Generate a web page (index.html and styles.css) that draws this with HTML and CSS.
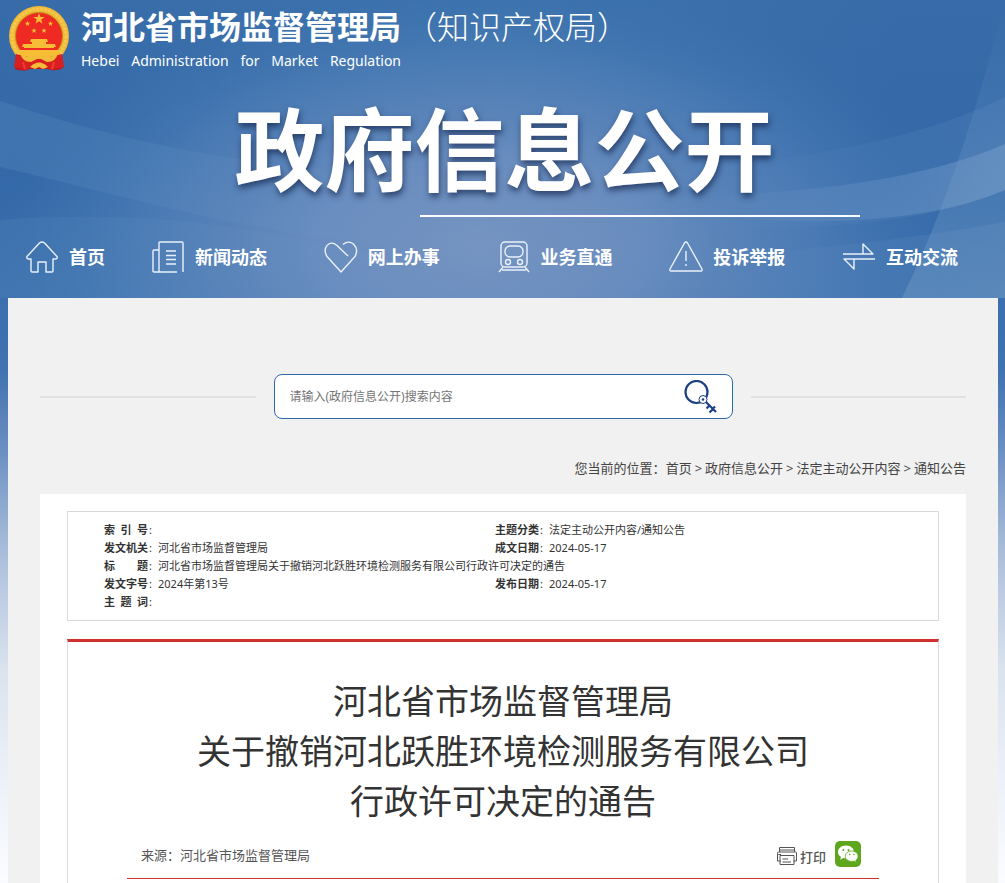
FILE: index.html
```html
<!DOCTYPE html>
<html lang="zh-CN">
<head>
<meta charset="utf-8">
<title>河北省市场监督管理局 - 政府信息公开</title>
<link rel="stylesheet" href="styles.css">
</head>
<body>
<svg class="backdrop" viewBox="0 0 1005 883" preserveAspectRatio="none" aria-hidden="true">
  <defs>
    <linearGradient id="sky" x1="0" y1="0" x2="0" y2="1">
      <stop offset="0" stop-color="#376ba9"/>
      <stop offset="0.2" stop-color="#3469a9"/>
      <stop offset="0.42" stop-color="#4073b0"/>
      <stop offset="0.51" stop-color="#6b8fc2"/>
      <stop offset="0.6" stop-color="#9db5d5"/>
      <stop offset="0.67" stop-color="#bccbe3"/>
      <stop offset="0.76" stop-color="#dae3ee"/>
      <stop offset="0.86" stop-color="#e9eef7"/>
      <stop offset="1" stop-color="#fbfcff"/>
    </linearGradient>
    <radialGradient id="glow" gradientUnits="userSpaceOnUse" cx="0" cy="0" r="1" gradientTransform="translate(480 245) scale(480 260)">
      <stop offset="0" stop-color="#7594c1"/>
      <stop offset="0.35" stop-color="#6d8fc0" stop-opacity="0.9"/>
      <stop offset="0.7" stop-color="#5f88bd" stop-opacity="0.45"/>
      <stop offset="1" stop-color="#4178b2" stop-opacity="0"/>
    </radialGradient>
    <linearGradient id="top" x1="0" y1="0" x2="1" y2="0">
      <stop offset="0" stop-color="#3f78b0" stop-opacity="0"/>
      <stop offset="0.5" stop-color="#3f78b0" stop-opacity="0.6"/>
      <stop offset="0.9" stop-color="#3f78b0" stop-opacity="0"/>
    </linearGradient>
    <linearGradient id="beam" x1="0" y1="0" x2="0" y2="1">
      <stop offset="0" stop-color="#7ea6cb" stop-opacity="0"/>
      <stop offset="0.5" stop-color="#7ea6cb" stop-opacity="0.2"/>
      <stop offset="1" stop-color="#7ea6cb" stop-opacity="0.35"/>
    </linearGradient>
    <linearGradient id="wave" x1="0" y1="0" x2="1" y2="0">
      <stop offset="0" stop-color="#8fb0d8" stop-opacity="0"/>
      <stop offset="1" stop-color="#8fb0d8" stop-opacity="0.35"/>
    </linearGradient>
    <linearGradient id="waveLeft" x1="0" y1="0" x2="1" y2="0">
      <stop offset="0" stop-color="#5f93c0" stop-opacity="0.25"/>
      <stop offset="1" stop-color="#7fa0d0" stop-opacity="0"/>
    </linearGradient>
  </defs>
  <rect width="1005" height="883" fill="url(#sky)"/>
  <rect width="1005" height="300" fill="url(#top)"/>
  <rect width="1005" height="500" fill="url(#glow)"/>
  <path d="M0 101Q130 145 260 162T500 180V250Q330 248 160 206T0 167Z" fill="url(#waveLeft)"/>
  <path d="M0 220Q160 208 300 240T600 262V298H0Z" fill="url(#waveLeft)" opacity="0.7"/>
  <path d="M1005 97Q900 150 700 168V226Q900 235 1005 190Z" fill="url(#wave)" opacity="0.35"/>
  <path d="M1005 144Q900 190 700 196V215Q900 235 1005 190Z" fill="url(#wave)"/>
  <path d="M1005 222Q850 250 700 255V298H1005Z" fill="url(#wave)" opacity="0.4"/>
  <path d="M1005 0Q960 180 902 298H1005Z" fill="url(#beam)"/>
</svg>

<header class="site-header">
  <div class="brand">
    <svg class="emblem" viewBox="0 0 62 66" role="img" aria-label="国徽">
      <path d="M8 48 L7 64 Q15 67 22 64 H40 Q48 67 55 63 L54 48 Z" fill="#c4161d"/>
      <circle cx="31" cy="31" r="30" fill="#efb935"/>
      <circle cx="31" cy="31" r="27" fill="none" stroke="#f5c84e" stroke-width="3" stroke-dasharray="3 1"/>
      <circle cx="31" cy="31" r="23.500" fill="#ee2a23" stroke="#c9871c" stroke-width="1"/>
      <g fill="#f6bd35">
        <path d="M31 8l1.400 4h4.300l-3.500 2.600 1.300 4.200-3.500-2.600-3.500 2.600 1.300-4.200L25.300 12h4.300z"/>
        <path id="star" d="M19.500 16l.7 1.800h2l-1.600 1.200.6 2-1.700-1.200-1.700 1.200.6-2-1.600-1.200h2z"/>
        <use href="#star" x="23"/>
        <use href="#star" x="6.500" y="7"/>
        <use href="#star" x="16.500" y="7"/>
        <path d="M23 34h16l1 3h-2v2h9l1 3h-2v1H16v-1h-2l1-3h9v-2h-2z"/>
        <path d="M9 45h44q-2 6-8 9H17q-6-3-8-9z"/>
      </g>
      <path d="M8 49l12 3 11 2 11-2 12-3 2 13-13 3-5-5-7-2-7 2-5 5-13-3z" fill="#d91f20"/>
      <path d="M12 48q8 6 14 3 5-4 10 0 6 3 14-3-2 9-11 9l-8-4-8 4q-9 0-11-9zM22 62q9-9 18 0l-5 2-4-2-4 2z" fill="#f3bb3a"/>
      <path d="M15 57l2 7M46 57l-2 7" stroke="#ef3c2e" stroke-width="2"/>
    </svg>
    <div class="brand-names">
      <div class="brand-cn">河北省市场监督管理局</div>
      <div class="brand-en">Hebei Administration for Market Regulation</div>
    </div>
    <div class="brand-sub">（知识产权局）</div>
  </div>
  <h1 class="banner-title">政府信息公开</h1>
  <hr class="banner-rule">
  <nav class="main-nav" aria-label="主导航">
    <a href="#home"><svg class="nav-icon" viewBox="0 0 34 34"><path d="M6 19H4Q1 19 2 16.500L14.500 3Q17 1 19.500 3L32 16.500Q33 19 30 19H28V31Q28 32 27 32H21V22H13V32H7Q6 32 6 31Z"/></svg>首页</a>
    <a href="#news"><svg class="nav-icon" viewBox="0 0 34 34"><path d="M26 32H3Q2 32 2 31V11Q2 10 3 10H8M8 32V3Q8 2 9 2H31Q32 2 32 3V32M15 11H25M15 15.500H25M15 19.500H25M15 24H25"/></svg>新闻动态</a>
    <a href="#service"><svg class="nav-icon" viewBox="0 0 34 34"><path d="M24 16L13 5.500C5-1 -2 8 3 16.500L17 32L31 16.500C36 7 27-2 19 4.500"/></svg>网上办事</a>
    <a href="#direct"><svg class="nav-icon" viewBox="0 0 34 34"><rect x="4" y="2" width="26" height="25" rx="4"/><rect x="8" y="6" width="18" height="11" rx="5"/><circle cx="11" cy="22" r="2.500"/><circle cx="23" cy="22" r="2.500"/><path d="M6 27L2 32M28 27L32 32M5 30H29"/></svg>业务直通</a>
    <a href="#report"><svg class="nav-icon" viewBox="0 0 34 34"><path d="M15.500 3Q17 1 18.500 3L33 29Q33.500 31 32 31H2Q.5 31 1 29ZM17 11V21M17 24V26"/></svg>投诉举报</a>
    <a href="#interact"><svg class="nav-icon" viewBox="0 0 34 34"><path d="M1 14H31L21 4V14M33 19H2L12 29V19"/></svg>互动交流</a>
  </nav>
</header>

<main class="page">
  <form class="search-row" role="search">
    <div class="search-box">
      <input type="text" aria-label="搜索政府信息公开内容" placeholder="请输入(政府信息公开)搜索内容">
      <button type="submit" aria-label="搜索">
        <svg viewBox="0 0 34 34" fill="none" stroke="#1c3f86">
          <circle cx="13.500" cy="12" r="11" stroke-width="2.200"/>
          <circle cx="20" cy="19.500" r="4" fill="#fff" stroke-width="1"/>
          <circle cx="20" cy="19.500" r="1.300" fill="#1c3f86" stroke="none"/>
          <path d="M23 22L33 32M26.500 25.500l-3 3M30 29l-3.500 3.500M30 28.500l2-2" stroke-width="2.200"/>
        </svg>
      </button>
    </div>
  </form>

  <nav class="crumbs" aria-label="当前位置">
    <span>您当前的位置：</span><a href="#home">首页</a><span class="sep">&gt;</span><a href="#open">政府信息公开</a><span class="sep">&gt;</span><a href="#content">法定主动公开内容</a><span class="sep">&gt;</span><a href="#notice">通知公告</a>
  </nav>

  <section class="panel">
    <div class="meta-box">
      <table class="meta">
        <colgroup><col class="col-label"><col><col class="col-label"><col class="col-right"></colgroup>
        <tr><th scope="row"><b>索 引 号</b>:</th><td></td><th scope="row"><b>主题分类</b>:</th><td>法定主动公开内容/通知公告</td></tr>
        <tr><th scope="row"><b>发文机关</b>:</th><td>河北省市场监督管理局</td><th scope="row"><b>成文日期</b>:</th><td>2024-05-17</td></tr>
        <tr><th scope="row"><b>标 题</b>:</th><td colspan="3">河北省市场监督管理局关于撤销河北跃胜环境检测服务有限公司行政许可决定的通告</td></tr>
        <tr><th scope="row"><b>发文字号</b>:</th><td>2024年第13号</td><th scope="row"><b>发布日期</b>:</th><td>2024-05-17</td></tr>
        <tr><th scope="row"><b>主 题 词</b>:</th><td colspan="3"></td></tr>
      </table>
    </div>

    <article class="article">
      <h2>河北省市场监督管理局<br>关于撤销河北跃胜环境检测服务有限公司<br>行政许可决定的通告</h2>
      <div class="byline">
        <span class="source">来源：河北省市场监督管理局</span>
        <button class="print" type="button">
          <svg viewBox="0 0 20 18" fill="none" stroke="#555"><path d="M2.500 5V.5h15V5M3 3h14M4 7.500H1.500Q.5 7.500.5 6.500V6Q.5 5 1.500 5h17q1 0 1 1v8h-3M4 14H.5V7M3 8.500h14v9H3zM5.500 12H11M5.500 15H14"/></svg>打印
        </button>
        <a class="wechat" href="#wechat" aria-label="微信分享">
          <svg viewBox="0 0 26 26"><rect width="26" height="26" rx="5" fill="#5ea71c"/><path d="M11 4.500c-4.600 0-8 2.900-8 6.500 0 2 1.100 3.800 3 5l-.8 2.700L8.300 17c.9.300 1.800.4 2.700.4 4.500 0 8-2.800 8-6.400S15.500 4.500 11 4.500z" fill="#fff"/><path d="M16.700 10c-3.700 0-6.400 2.300-6.400 5.200s2.800 5.200 6.400 5.200c.8 0 1.500-.1 2.200-.3l2.500 1.400-.6-2.200c1.500-1 2.300-2.400 2.300-4.100 0-2.900-2.800-5.200-6.400-5.200z" fill="#fff" stroke="#5ea71c" stroke-width=".8"/><g fill="#5ea71c"><circle cx="8.300" cy="9" r="1"/><circle cx="13.500" cy="9" r="1"/><circle cx="14.700" cy="13.500" r=".8"/><circle cx="18.900" cy="13.500" r=".8"/></g></svg>
        </a>
      </div>
    </article>
  </section>
</main>
</body>
</html>
```
FILE: styles.css
```css
* {
  box-sizing: border-box;
}

body {
  margin: 0;
  min-height: 100vh;
  display: flex;
  flex-direction: column;
  position: relative;
  font-family: "Noto Sans", "Noto Sans CJK SC", sans-serif;
  font-size: 13px;
  color: #333;
}

a {
  color: inherit;
  text-decoration: none;
}

.backdrop {
  position: absolute;
  top: 0;
  left: 0;
  z-index: -1;
  width: 100%;
  height: 100%;
}

/* Header */
.site-header {
  color: #fff;
}

.brand {
  display: flex;
  align-items: flex-start;
  height: 76px;
  padding: 5px 8px 0;
}

.emblem {
  width: 62px;
  height: 66px;
}

.brand-names {
  margin-left: 11px;
  margin-right: 4px;
}

.brand-cn {
  font-size: 32px;
  line-height: 44px;
  font-weight: 700;
}

.brand-en {
  font-size: 14px;
  line-height: 24px;
  text-align-last: justify;
}

.brand-sub {
  font-family: "Noto Sans CJK SC", sans-serif;
  font-size: 32px;
  line-height: 40px;
  font-weight: 300;
}

.banner-title {
  margin: 0;
  padding: 4px 0 4px 4px;
  font-family: "Noto Sans CJK SC", sans-serif;
  font-size: 90px;
  line-height: 131px;
  font-weight: 700;
  text-align: center;
  text-shadow: 1px 4px 6px rgba(30, 50, 90, 0.8);
}

.banner-rule {
  width: 440px;
  height: 2px;
  margin: 0 145px 0 auto;
  border: 0;
  background: #fff;
}

.main-nav {
  display: grid;
  grid-template-columns: 126px repeat(4, 1fr) 117px;
  padding: 23px 46px 24px 25px;
}

.main-nav a {
  display: flex;
  align-items: center;
  gap: 10px;
  font-size: 18px;
  line-height: 34px;
  font-weight: 700;
  white-space: nowrap;
}

.nav-icon {
  flex: none;
  width: 34px;
  height: 34px;
  fill: none;
  stroke: #eaf1fa;
  stroke-width: 1.4;
  stroke-linejoin: round;
}

/* Page body */
.page {
  flex: 1;
  display: flex;
  flex-direction: column;
  margin: 0 7px 0 8px;
  padding: 76px 32px 0;
  background: #f1f1f1;
}

.search-row {
  display: flex;
  align-items: center;
  gap: 18px;
}

.search-row::before,
.search-row::after {
  content: "";
  flex: 1;
  height: 2px;
  background: #e1e1e1;
}

.search-box {
  display: flex;
  align-items: center;
  width: 459px;
  height: 45px;
  padding: 0 15px;
  border: 1px solid #2d68a8;
  border-radius: 8px;
  background: #fff;
}

.search-box input {
  flex: 1;
  padding: 0;
  border: 0;
  outline: 0;
  background: none;
  font: inherit;
  font-size: 12px;
}

.search-box input::placeholder {
  color: #757575;
}

.search-box button {
  width: 34px;
  height: 34px;
  padding: 0;
  border: 0;
  background: none;
}

.crumbs {
  padding: 39px 0 16px;
  line-height: 20px;
  text-align: right;
  color: #444;
}

.sep {
  margin: 0 3px;
}

.panel {
  flex: 1;
  display: flex;
  flex-direction: column;
  padding: 17px 27px 0;
  background: #fff;
}

.meta-box {
  padding: 9px 36px;
  border: 1px solid #d9d9d9;
}

.meta {
  width: 100%;
  table-layout: fixed;
  border-collapse: collapse;
  font-size: 11px;
  line-height: 18px;
}

.col-label {
  width: 54px;
}

.col-right {
  width: 353px;
}

.meta th,
.meta td {
  height: 18px;
  padding: 0;
  font-weight: 400;
  text-align: left;
}

.meta b {
  display: inline-block;
  width: 44px;
  margin-right: 1px;
  text-align-last: justify;
}

.article {
  flex: 1;
  margin-top: 18px;
  padding: 34px 59px 0;
  border: 1px solid #d9d9d9;
  border-top: 3px solid #d0302f;
  border-bottom: 0;
}

.article h2 {
  margin: 0;
  font-size: 34px;
  line-height: 50px;
  font-weight: 400;
  text-align: center;
}

.byline {
  display: flex;
  align-items: center;
  height: 53px;
  padding: 4px 18px 0 14px;
  border-bottom: 1px solid #d0302f;
  color: #555;
}

.source {
  flex: 1;
}

.print {
  display: flex;
  align-items: center;
  gap: 3px;
  padding: 4px 0 0;
  border: 0;
  background: none;
  font: inherit;
  font-weight: 500;
  color: #555;
}

.print svg {
  width: 20px;
  height: 18px;
}

.wechat svg {
  display: block;
  width: 26px;
  height: 26px;
}

.wechat {
  margin-left: 9px;
}
```
